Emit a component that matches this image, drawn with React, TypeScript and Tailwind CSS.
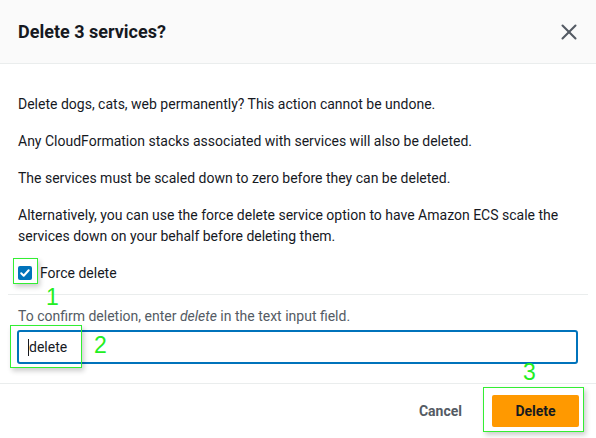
import { X } from "lucide-react";

const paragraphs = [
  "Delete dogs, cats, web permanently? This action cannot be undone.",
  "Any CloudFormation stacks associated with services will also be deleted.",
  "The services must be scaled down to zero before they can be deleted.",
  "Alternatively, you can use the force delete service option to have Amazon ECS scale the services down on your behalf before deleting them.",
];

function Marker({ label, className }: { label: string; className: string }) {
  return (
    <span
      className={`absolute text-[23px] leading-none text-[#22ee22] font-['Liberation_Sans',sans-serif] ${className}`}
    >
      {label}
    </span>
  );
}

export default function App() {
  return (
    <div className="w-[596px] h-[438px] bg-white text-[#16191f] font-['Roboto',sans-serif] flex flex-col overflow-hidden">
      {/* Header */}
      <div className="h-[64px] shrink-0 flex items-center justify-between pl-[18px] pr-[14px] bg-[#fafafa] border-b border-[#eaeded]">
        <h2 className="text-[18px] font-bold">Delete 3 services?</h2>
        <X className="w-[26px] h-[26px] text-[#545b64]" strokeWidth={1.9} />
      </div>

      {/* Body */}
      <div className="relative flex flex-col pt-[30px] text-[14px] leading-[21px]">
        <div className="flex flex-col gap-4 pl-[18px] pr-[18px]">
          {paragraphs.map((p, i) => (
            <p key={i}>{p}</p>
          ))}
        </div>

        <label className="relative mt-[14px] ml-[18px] flex items-center gap-2 h-[24px]">
          <span className="w-[14px] h-[14px] rounded-[2px] bg-[#0073bb] flex items-center justify-center">
            <svg viewBox="0 0 14 14" className="w-[14px] h-[14px]">
              <path d="M3.2 7.2l2.5 2.5 5-5.4" fill="none" stroke="white" strokeWidth="2" strokeLinecap="round" strokeLinejoin="round" />
            </svg>
          </span>
          <span>Force delete</span>
          <span className="absolute left-[-5px] top-[-3px] w-[25px] h-[26px] border border-[#33ee33] shadow-[2px_3px_5px_rgba(0,0,0,0.2)]" />
          <Marker label="1" className="left-[28px] top-[25px]" />
        </label>

        <div className="mx-2 mt-[9px] border-t border-[#eaeded]" />

        <p className="mt-[11px] pl-[18px] text-[#545b64]">
          To confirm deletion, enter <i>delete</i> in the text input field.
        </p>

        <div className="relative mt-[3px] ml-[17px] mr-[18px]">
          <div className="h-[34px] rounded-[3px] border-2 border-[#0073bb] flex items-center pl-[9px]">
            <span className="w-px h-[17px] bg-[#16191f]" />
            <span className="text-[#16191f]">delete</span>
          </div>
          <span className="absolute left-[-7px] top-[-5px] w-[72px] h-[43px] border border-[#33ee33] shadow-[2px_3px_5px_rgba(0,0,0,0.2)]" />
          <Marker label="2" className="left-[77px] top-[4px]" />
        </div>
      </div>

      {/* Footer */}
      <div className="relative mt-[19px] flex-1 border-t border-[#eaeded] flex items-start justify-end gap-[30px] pt-[11px] pr-[17px]">
        <button className="h-[32px] text-[14px] font-bold text-[#545b64]">Cancel</button>
        <div className="relative">
          <button className="w-[87px] h-[32px] rounded-[2px] bg-[#ff9900] text-[14px] font-bold text-[#16191f]">
            Delete
          </button>
          <span className="absolute left-[-9px] top-[-8px] w-[101px] h-[45px] border border-[#33ee33] shadow-[2px_3px_5px_rgba(0,0,0,0.2)]" />
          <Marker label="3" className="left-[31px] top-[-34px]" />
        </div>
      </div>
    </div>
  );
}
